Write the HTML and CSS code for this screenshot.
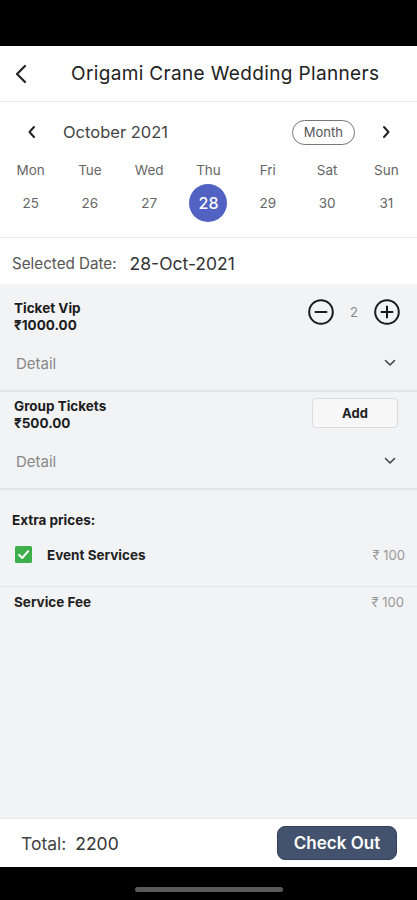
FILE: index.html
```html
<!DOCTYPE html>
<html>
<head>
<meta charset="utf-8">
<link rel="stylesheet" href="styles.css">
</head>
<body>
<div class="screen">
  <div class="statusbar"></div>
  <header class="topbar">
    <svg class="back" width="14" height="20" viewBox="0 0 14 20"><path d="M11 2 L3 10 L11 18" fill="none" stroke="#222" stroke-width="2.2" stroke-linecap="round" stroke-linejoin="round"/></svg>
    <h1 class="title">Origami Crane Wedding Planners</h1>
  </header>
  <section class="calendar">
    <div class="cal-head">
      <svg class="chev-l" width="10" height="14" viewBox="0 0 10 14"><path d="M7 2 L2.5 7 L7 12" fill="none" stroke="#222" stroke-width="2" stroke-linecap="round" stroke-linejoin="round"/></svg>
      <span class="month-label">October 2021</span>
      <span class="pill">Month</span>
      <svg class="chev-r" width="10" height="14" viewBox="0 0 10 14"><path d="M3 2 L7.5 7 L3 12" fill="none" stroke="#222" stroke-width="2" stroke-linecap="round" stroke-linejoin="round"/></svg>
    </div>
    <div class="week">
      <span class="dn">Mon</span><span class="dn">Tue</span><span class="dn">Wed</span><span class="dn">Thu</span><span class="dn">Fri</span><span class="dn">Sat</span><span class="dn">Sun</span>
      <span class="dd">25</span><span class="dd">26</span><span class="dd">27</span><span class="dd"><span class="sel">28</span></span><span class="dd">29</span><span class="dd">30</span><span class="dd">31</span>
    </div>
  </section>
  <div class="selected-row">
    <span class="sel-label">Selected Date:</span>
    <span class="sel-value">28-Oct-2021</span>
  </div>
  <main class="content">
    <div class="ticket">
      <div class="ticket-top">
        <div class="tinfo">
          <div class="tname">Ticket Vip</div>
          <div class="tprice">₹1000.00</div>
        </div>
        <div class="stepper">
          <svg width="28" height="28" viewBox="0 0 28 28"><circle cx="14" cy="14" r="11.8" fill="none" stroke="#1a1a1a" stroke-width="2"/><path d="M8.5 14 H19.5" stroke="#1a1a1a" stroke-width="2" stroke-linecap="round"/></svg>
          <span class="qty">2</span>
          <svg width="28" height="28" viewBox="0 0 28 28"><circle cx="14" cy="14" r="11.8" fill="none" stroke="#1a1a1a" stroke-width="2"/><path d="M8.5 14 H19.5 M14 8.5 V19.5" stroke="#1a1a1a" stroke-width="2" stroke-linecap="round"/></svg>
        </div>
      </div>
      <div class="detail">
        <span>Detail</span>
        <svg width="12" height="8" viewBox="0 0 12 8"><path d="M1.5 1.5 L6 6 L10.5 1.5" fill="none" stroke="#444" stroke-width="1.6" stroke-linecap="round" stroke-linejoin="round"/></svg>
      </div>
    </div>
    <div class="ticket ticket-group">
      <div class="ticket-top">
        <div class="tinfo">
          <div class="tname">Group Tickets</div>
          <div class="tprice">₹500.00</div>
        </div>
        <button class="add">Add</button>
      </div>
      <div class="detail">
        <span>Detail</span>
        <svg width="12" height="8" viewBox="0 0 12 8"><path d="M1.5 1.5 L6 6 L10.5 1.5" fill="none" stroke="#444" stroke-width="1.6" stroke-linecap="round" stroke-linejoin="round"/></svg>
      </div>
    </div>
    <div class="extras">
      <div class="extras-title">Extra prices:</div>
      <div class="extra-row">
        <span class="check"><svg width="17" height="17" viewBox="0 0 17 17"><rect width="17" height="17" rx="1.5" fill="#3db04b"/><path d="M4 8.8 L7.2 12 L13.2 5.2" fill="none" stroke="#fff" stroke-width="2" stroke-linecap="round" stroke-linejoin="round"/></svg></span>
        <span class="extra-name">Event Services</span>
        <span class="amt">₹ 100</span>
      </div>
    </div>
    <div class="fee-row">
      <span class="fee-name">Service Fee</span>
      <span class="amt">₹ 100</span>
    </div>
  </main>
  <footer class="footer">
    <span class="total"><span class="total-label">Total:</span> 2200</span>
    <button class="checkout">Check Out</button>
  </footer>
  <div class="homebar"><span class="indicator"></span></div>
</div>
</body>
</html>
```
FILE: styles.css
```css
* { box-sizing: border-box; }
html, body { margin: 0; padding: 0; }
body {
  font-family: Inter, "Noto Sans", "Liberation Sans", sans-serif;
  color: #222;
  background: #000;
}
.screen {
  width: 417px;
  height: 900px;
  display: flex;
  flex-direction: column;
  background: #fff;
}
.statusbar { height: 46px; background: #000; flex: none; }
.topbar {
  height: 56px;
  flex: none;
  display: flex;
  align-items: center;
  border-bottom: 1px solid #ececec;
  padding-left: 14px;
}
.back { flex: none; }
.title {
  margin: 0 0 0 43px;
  font-size: 19px;
  font-weight: 400;
  color: #222;
  letter-spacing: 0.35px;
}
.calendar {
  flex: none;
  height: 136px;
  border-bottom: 1px solid #ececec;
  padding-top: 17px;
}
.cal-head {
  display: flex;
  align-items: center;
  height: 26px;
  padding: 0 0 0 27px;
}
.month-label {
  margin-left: 26px;
  font-size: 16.5px;
  color: #444;
}
.pill {
  margin-left: auto;
  border: 1px solid #777;
  border-radius: 13px;
  height: 25px;
  padding: 0 11px;
  display: flex;
  align-items: center;
  font-size: 13px;
  color: #555;
}
.chev-r { margin: 0 26px 0 26px; }
.week {
  display: grid;
  grid-template-columns: repeat(7, 1fr);
  margin-top: 14px;
  padding: 0 1px;
}
.dn {
  text-align: center;
  font-size: 13.5px;
  color: #666;
  height: 22px;
  line-height: 22px;
}
.dd {
  height: 44px;
  display: flex;
  align-items: center;
  justify-content: center;
  font-size: 13.5px;
  color: #666;
}
.sel {
  width: 38px;
  height: 38px;
  border-radius: 50%;
  background: #5262c2;
  color: #fff;
  font-weight: 500;
  font-size: 16px;
  display: flex;
  align-items: center;
  justify-content: center;
}
.selected-row {
  flex: none;
  height: 46px;
  display: flex;
  align-items: center;
  padding: 4px 0 0 12px;
  gap: 13px;
}
.sel-label { font-size: 15.2px; color: #555; }
.sel-value { font-size: 17.5px; color: #333; }
.content {
  flex: 1;
  background: #f2f3f5;
  display: flex;
  flex-direction: column;
}
.ticket {
  border-bottom: 2px solid #e2e3e5;
}
.ticket-top {
  display: flex;
  align-items: flex-start;
  padding: 16px 16px 0 14px;
  height: 57px;
}
.tinfo { flex: 1; }
.tname, .tprice {
  font-size: 13.5px;
  font-weight: 700;
  color: #1c1c1c;
  line-height: 17px;
}
.stepper {
  display: flex;
  align-items: center;
  margin-top: -2px;
}
.qty {
  width: 38px;
  text-align: center;
  font-size: 13px;
  color: #888;
}
.detail {
  height: 44px;
  margin-bottom: 5px;
  display: flex;
  align-items: center;
  justify-content: space-between;
  padding: 0 21px 0 16px;
  font-size: 15px;
  color: #888;
}
.ticket-group .ticket-top { padding-top: 6px; height: 47px; }
.add {
  width: 86px;
  height: 30px;
  margin-right: 3px;
  background: #f7f7f8;
  border: 1px solid #dcdcde;
  border-radius: 4px;
  font-family: inherit;
  font-size: 13px;
  font-weight: 700;
  color: #222;
}
.extras {
  padding: 22px 12px 0 12px;
  height: 97px;
  border-bottom: 1px solid #e4e5e7;
}
.extras-title {
  font-size: 13.5px;
  font-weight: 700;
  color: #1c1c1c;
  line-height: 17px;
}
.extra-row {
  display: flex;
  align-items: center;
  margin-top: 17px;
  padding-left: 3px;
}
.check { display: flex; margin-right: 15px; }
.extra-name { flex: 1; font-size: 13.5px; font-weight: 700; color: #222; }
.amt { font-size: 13px; color: #999; }
.fee-row {
  display: flex;
  align-items: center;
  padding: 7px 13px 0 14px;
}
.fee-name { flex: 1; font-size: 13.5px; font-weight: 700; color: #222; }
.footer {
  flex: none;
  height: 49px;
  border-top: 1px solid #e8e8e8;
  display: flex;
  align-items: center;
  padding: 0 20px 0 21px;
  background: #fff;
}
.total { flex: 1; font-size: 17.5px; color: #333; }
.total-label { margin-right: 4px; color: #444; }
.checkout {
  width: 120px;
  height: 34px;
  background: #44536d;
  color: #fff;
  border: 1px solid #34415a;
  border-radius: 8px;
  font-family: inherit;
  font-size: 17px;
  font-weight: 600;
}
.homebar {
  flex: none;
  height: 33px;
  background: #000;
  display: flex;
  justify-content: center;
  padding-top: 20px;
}
.indicator {
  width: 148px;
  height: 5px;
  border-radius: 3px;
  background: #5a5a5a;
}
```
